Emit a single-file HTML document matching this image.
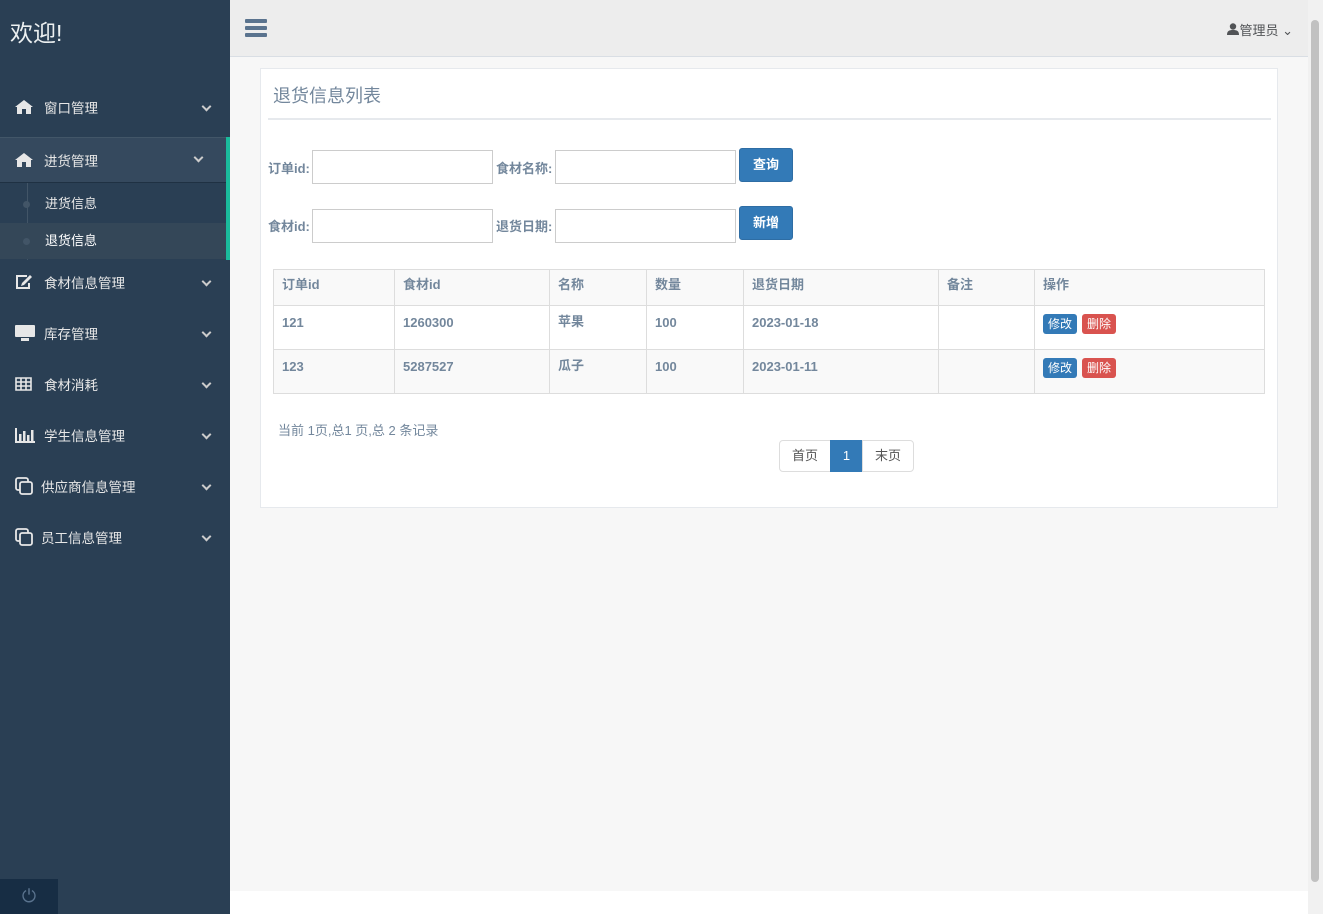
<!DOCTYPE html>
<html><head><meta charset="utf-8"><style>
*{box-sizing:border-box;margin:0;padding:0}
body{width:1323px;height:914px;overflow:hidden;font-family:"Liberation Sans","Noto Sans CJK SC",sans-serif;font-size:13px;background:#f7f7f7;position:relative;color:#73879c}
.side{position:absolute;left:0;top:0;width:230px;height:914px;background:#2a3f54;color:#e7e7e7}
.logo{position:absolute;left:10px;top:14px;font-size:23px;color:#ecf0f1}
.mi{position:absolute;left:0;width:230px;height:50px;font-size:13.5px;color:#e7e7e7}
.mi svg{position:absolute;left:15px;top:17px}
.mi .t{position:absolute;left:44px;top:1px}
.mi .ch{position:absolute;right:20px;width:7px;height:7px;border-right:2px solid #ccc;border-bottom:2px solid #ccc;transform:rotate(45deg)}
.sub{position:absolute;left:0;width:225px;height:36px;font-size:13px}
.top{position:absolute;left:230px;top:0;right:15px;height:57px;background:#ededed;border-bottom:1px solid #d9dee4}
.panel{position:absolute;left:260px;top:68px;width:1018px;height:440px;background:#fff;border:1px solid #e6e9ed}
input{position:absolute;height:34px;border:1px solid #ccc;background:#fff}
.lbl{position:absolute;font-weight:bold;font-size:13px;color:#73879c}
.btn{position:absolute;background:#337ab7;border:1px solid #2e6da4;color:#fff;border-radius:3px;width:54px;height:34px;line-height:32px;text-align:center;font-size:13px;font-weight:bold}
table{position:absolute;left:273px;top:269px;width:992px;border-collapse:collapse;font-weight:bold;font-size:13px}
td,th{border:1px solid #ddd;text-align:left;vertical-align:top;padding:8px 8px 8px;font-weight:bold;color:#73879c;line-height:18px}
th{height:36px;padding-top:6px}td{height:44px}
tr:nth-child(odd){background:#f9f9f9}tr:nth-child(2){background:#fff}
.c{position:relative;top:-1px}
.sb{display:inline-block;font-size:12px;color:#fff;padding:2px 5px;border-radius:3px;font-weight:normal;margin-right:5px;line-height:16px}
.pg{position:absolute;top:440px;height:32px;line-height:30px;border:1px solid #ddd;text-align:center;font-size:13px;background:#fff;color:#555}
</style></head><body>
<div class="side">
<div class="logo">欢迎!</div>
<div class="mi" style="top:83px;line-height:50px"><svg width="18" height="14" viewBox="0 0 18 14"><path d="M9 0L0 7h2v7h5V9h4v5h5V7h2z" fill="#e7e7e7"/></svg><span class="t">窗口管理</span><span class="ch" style="top:20px"></span></div>
<div class="mi" style="top:137px;height:46px;line-height:46px;background:#35495e;border-top:1px solid #425668;border-bottom:1px solid #1f3143;width:226px"><svg width="18" height="14" viewBox="0 0 18 14" style="top:15px"><path d="M9 0L0 7h2v7h5V9h4v5h5V7h2z" fill="#e7e7e7"/></svg><span class="t">进货管理</span><span class="ch" style="top:16px;right:24px"></span></div>
<div style="position:absolute;left:226px;top:137px;width:4px;height:123px;background:#1abb9c"></div>
<div style="position:absolute;left:27px;top:183px;width:1px;height:77px;background:#425567"></div>
<div class="sub" style="top:186px;line-height:36px"><span style="position:absolute;left:23px;top:15px;width:7px;height:7px;border-radius:50%;background:#425567"></span><span style="position:absolute;left:45px;color:#e7e7e7">进货信息</span></div>
<div class="sub" style="top:223px;line-height:36px;background:#344758;width:226px"><span style="position:absolute;left:23px;top:15px;width:7px;height:7px;border-radius:50%;background:#425567"></span><span style="position:absolute;left:45px;color:#fff">退货信息</span></div>
<div class="mi" style="top:258px;line-height:50px"><svg width="18" height="16" viewBox="0 0 18 16" style="top:16px"><path d="M12 2H2v12h12V9" fill="none" stroke="#e7e7e7" stroke-width="2"/><path d="M15 1l2 2-8 8-3 1 1-3z" fill="#e7e7e7"/></svg><span class="t">食材信息管理</span><span class="ch" style="top:20px"></span></div>
<div class="mi" style="top:309px;line-height:50px"><svg width="20" height="16" viewBox="0 0 20 16" style="top:16px"><rect x="0" y="0" width="20" height="12" rx="1" fill="#e7e7e7"/><rect x="6" y="13" width="8" height="3" fill="#e7e7e7"/></svg><span class="t">库存管理</span><span class="ch" style="top:20px"></span></div>
<div class="mi" style="top:360px;line-height:50px"><svg width="17" height="14" viewBox="0 0 17 14"><path d="M1 1h15v12H1zM1 5h15M1 9h15M6 1v12M11 1v12" fill="none" stroke="#e7e7e7" stroke-width="1.6"/></svg><span class="t">食材消耗</span><span class="ch" style="top:20px"></span></div>
<div class="mi" style="top:411px;line-height:50px"><svg width="20" height="15" viewBox="0 0 20 15"><path d="M1 0v14h19" fill="none" stroke="#e7e7e7" stroke-width="2"/><rect x="4" y="6" width="2.5" height="7" fill="#e7e7e7"/><rect x="8" y="3" width="2.5" height="10" fill="#e7e7e7"/><rect x="12" y="7" width="2.5" height="6" fill="#e7e7e7"/><rect x="16" y="2" width="2.5" height="11" fill="#e7e7e7"/></svg><span class="t">学生信息管理</span><span class="ch" style="top:20px"></span></div>
<div class="mi" style="top:462px;line-height:50px"><svg width="20" height="18" viewBox="0 0 20 18" style="top:15px"><rect x="1" y="1" width="12" height="12" rx="2" fill="none" stroke="#e7e7e7" stroke-width="1.8"/><rect x="5" y="5" width="12" height="12" rx="2" fill="#2a3f54" stroke="#e7e7e7" stroke-width="1.8"/></svg><span class="t" style="left:41px">供应商信息管理</span><span class="ch" style="top:20px"></span></div>
<div class="mi" style="top:513px;line-height:50px"><svg width="20" height="18" viewBox="0 0 20 18" style="top:15px"><rect x="1" y="1" width="12" height="12" rx="2" fill="none" stroke="#e7e7e7" stroke-width="1.8"/><rect x="5" y="5" width="12" height="12" rx="2" fill="#2a3f54" stroke="#e7e7e7" stroke-width="1.8"/></svg><span class="t" style="left:41px">员工信息管理</span><span class="ch" style="top:20px"></span></div>
<div style="position:absolute;left:0;top:879px;width:58px;height:35px;background:#172d44;color:#5a738e;text-align:center;line-height:35px;font-size:18px">⏻</div>
</div>
<div class="top">
<div style="position:absolute;left:15px;top:19px;width:22px;height:4px;border-radius:1px;background:#5a738e;box-shadow:0 7px 0 #5a738e,0 14px 0 #5a738e"></div>
<div style="position:absolute;right:15px;top:20px;font-size:13px;color:#515356"><svg width="12" height="12" viewBox="0 0 12 12"><circle cx="6" cy="3.5" r="3.2" fill="#515356"/><path d="M0 12c0-4 2-5 6-5s6 1 6 5z" fill="#515356"/></svg>管理员 ⌄</div>
</div>
<div style="position:absolute;left:230px;top:891px;width:1078px;height:23px;background:#fff"></div>
<div style="position:absolute;right:0;top:0;width:15px;height:914px;background:#f1f1f1"><div style="position:absolute;left:3px;top:20px;width:8px;height:862px;background:#c1c1c1;border-radius:4px"></div></div>
<div class="panel">
<div style="position:absolute;left:12px;top:13px;font-size:18px;color:#73879c">退货信息列表</div>
<div style="position:absolute;left:7px;top:49px;width:1003px;height:2px;background:#e6e9ed"></div>
</div>
<span class="lbl" style="left:268px;top:158px">订单id:</span><input style="left:312px;top:150px;width:181px">
<span class="lbl" style="left:496px;top:158px">食材名称:</span><input style="left:555px;top:150px;width:181px">
<div class="btn" style="left:739px;top:148px">查询</div>
<span class="lbl" style="left:268px;top:216px">食材id:</span><input style="left:312px;top:209px;width:181px">
<span class="lbl" style="left:496px;top:216px">退货日期:</span><input style="left:555px;top:209px;width:181px">
<div class="btn" style="left:739px;top:206px">新增</div>
<table>
<tr><th style="width:121px">订单id</th><th style="width:155px">食材id</th><th style="width:97px">名称</th><th style="width:97px">数量</th><th style="width:195px">退货日期</th><th style="width:96px">备注</th><th>操作</th></tr>
<tr><td>121</td><td>1260300</td><td><span class="c">苹果</span></td><td>100</td><td>2023-01-18</td><td></td><td><span class="sb" style="background:#337ab7">修改</span><span class="sb" style="background:#d9534f">删除</span></td></tr>
<tr><td>123</td><td>5287527</td><td><span class="c">瓜子</span></td><td>100</td><td>2023-01-11</td><td></td><td><span class="sb" style="background:#337ab7">修改</span><span class="sb" style="background:#d9534f">删除</span></td></tr>
</table>
<div style="position:absolute;left:278px;top:420px;font-size:13px">当前 1页,总1 页,总 2 条记录</div>
<div class="pg" style="left:779px;width:52px;border-radius:4px 0 0 4px">首页</div>
<div class="pg" style="left:830px;width:33px;background:#337ab7;border-color:#337ab7;color:#fff">1</div>
<div class="pg" style="left:862px;width:52px;border-radius:0 4px 4px 0">末页</div>
</body></html>
